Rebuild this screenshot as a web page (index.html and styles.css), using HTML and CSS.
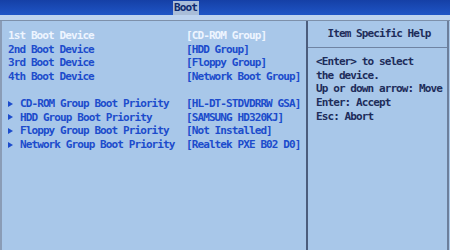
FILE: index.html
```html
<!DOCTYPE html>
<html>
<head>
<meta charset="utf-8">
<link rel="stylesheet" href="styles.css">
</head>
<body>
<div class="topbar"><span class="tab">Boot</span></div>
<div class="strip"></div>
<div class="main">
  <div class="left">
    <div class="row sel"><span class="label">1st Boot Device</span><span class="val">[CD-ROM Group]</span></div>
    <div class="row"><span class="label">2nd Boot Device</span><span class="val">[HDD Group]</span></div>
    <div class="row"><span class="label">3rd Boot Device</span><span class="val">[Floppy Group]</span></div>
    <div class="row"><span class="label">4th Boot Device</span><span class="val">[Network Boot Group]</span></div>
    <div class="row gap"></div>
    <div class="row"><span class="label"><i class="tri"></i>CD-ROM Group Boot Priority</span><span class="val">[HL-DT-STDVDRRW GSA]</span></div>
    <div class="row"><span class="label"><i class="tri"></i>HDD Group Boot Priority</span><span class="val">[SAMSUNG HD320KJ]</span></div>
    <div class="row"><span class="label"><i class="tri"></i>Floppy Group Boot Priority</span><span class="val">[Not Installed]</span></div>
    <div class="row"><span class="label"><i class="tri"></i>Network Group Boot Priority</span><span class="val">[Realtek PXE B02 D0]</span></div>
  </div>
  <div class="right">
    <div class="help-head">Item Specific Help</div>
    <div class="help-body">
      <div>&lt;Enter&gt; to select</div>
      <div>the device.</div>
      <div>Up or down arrow: Move</div>
      <div>Enter: Accept</div>
      <div>Esc: Abort</div>
    </div>
  </div>
</div>
</body>
</html>
```

FILE: styles.css
```css
html, body {
  margin: 0;
  padding: 0;
}
body {
  width: 450px;
  height: 250px;
  overflow: hidden;
  background: #a8c7e9;
  font-family: "DejaVu Sans Mono", "Liberation Mono", monospace;
  font-weight: bold;
  font-size: 11px;
  letter-spacing: -0.9px;
  display: flex;
  flex-direction: column;
}
.topbar {
  height: 15px;
  background: linear-gradient(180deg, #1540a6 0%, #1f55c6 100%);
  display: flex;
  align-items: flex-end;
  padding-left: 173px;
}
.tab {
  display: block;
  height: 14px;
  line-height: 14px;
  padding: 0 2px 0 1px;
  background: #a9bdd8;
  color: #0e2a6e;
}
.strip {
  height: 5px;
  background: #bdd3ee;
  border-bottom: 1px solid #7d90aa;
}
.main {
  flex: 1;
  display: flex;
  border-left: 2px solid #8a9cb6;
}
.left {
  width: 298px;
  padding: 8px 0 0 6px;
  border-right: 2px solid #4c5d7c;
}
.row {
  display: flex;
  height: 13.6px;
  line-height: 13.6px;
  color: #1c4ccc;
  white-space: nowrap;
}
.row.sel {
  color: #eef5ff;
}
.label {
  width: 178px;
  display: flex;
  align-items: center;
}
.tri {
  display: inline-block;
  width: 0;
  height: 0;
  border-top: 3px solid transparent;
  border-bottom: 3px solid transparent;
  border-left: 5px solid #1c4ccc;
  margin-right: 7px;
}
.right {
  width: 139px;
  border-right: 2px solid #6c7f9c;
  color: #1d2c5a;
}
.help-head {
  height: 26px;
  line-height: 26px;
  text-align: center;
  border-bottom: 1px solid #6f84a3;
  padding-left: 3px;
}
.help-body {
  padding: 7px 0 0 8px;
  line-height: 13.7px;
  white-space: nowrap;
}
```
